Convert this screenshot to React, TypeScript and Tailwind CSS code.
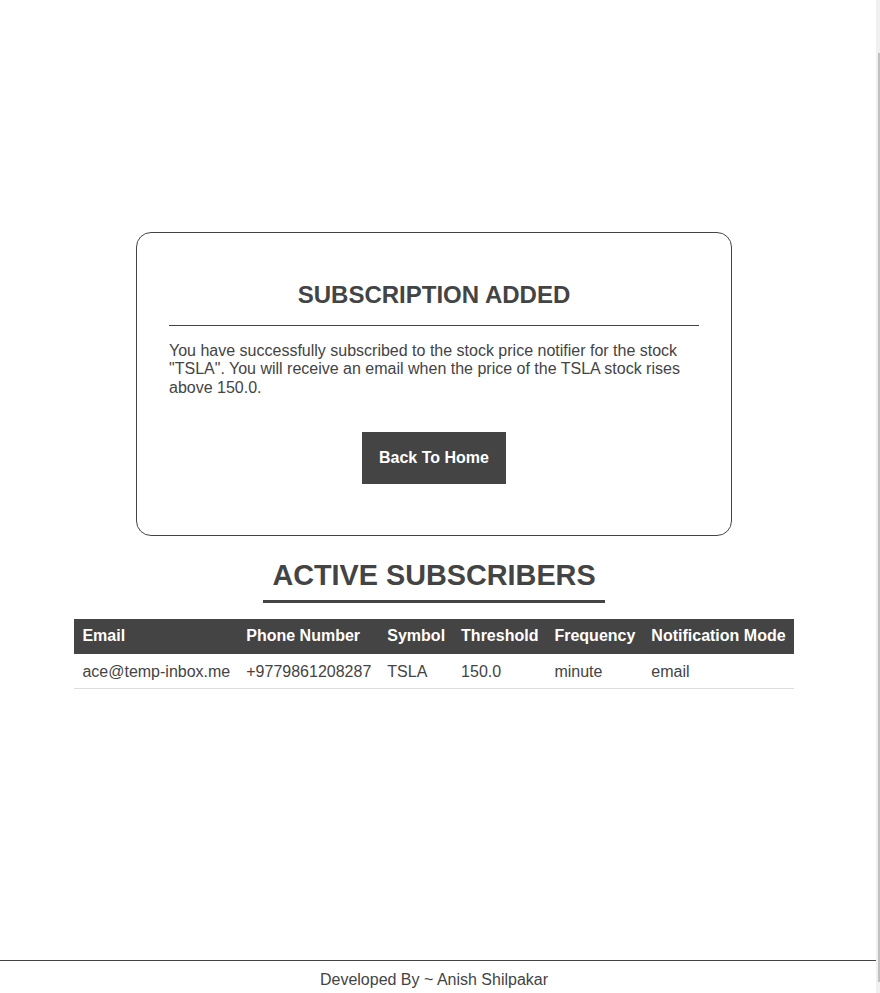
const subscribers = [
  {
    email: "ace@temp-inbox.me",
    phone: "+9779861208287",
    symbol: "TSLA",
    threshold: "150.0",
    frequency: "minute",
    mode: "email",
  },
];

const columns = [
  "Email",
  "Phone Number",
  "Symbol",
  "Threshold",
  "Frequency",
  "Notification Mode",
];

function SubscriptionCard() {
  return (
    <div className="mt-[232px] w-[596px] rounded-[15px] border border-[#444] px-[32px] pt-[48px] pb-[51px]">
      <h2 className="text-center text-[24px] leading-[1.15] font-bold text-[#444]">
        SUBSCRIPTION ADDED
      </h2>
      <hr className="mt-[16.6px] border-t border-[#444]" />
      <p className="mt-[15.8px] text-[16px] leading-[1.15] text-[#444]">
        You have successfully subscribed to the stock price notifier for the
        stock "TSLA". You will receive an email when the price of the TSLA
        stock rises above 150.0.
      </p>
      <div className="mt-[35px] flex justify-center">
        <button className="h-[52px] w-[144px] bg-[#444] text-[16px] font-bold text-white">
          Back To Home
        </button>
      </div>
    </div>
  );
}

function SubscribersTable() {
  return (
    <>
      <h2 className="mt-[23px] border-b-[3px] border-[#444] px-[9px] pb-[8px] text-[28.8px] leading-[1.15] font-bold text-[#444]">
        ACTIVE SUBSCRIBERS
      </h2>
      <table className="mt-[16px] text-[16px] leading-[1.15]">
        <thead>
          <tr className="bg-[#444] text-white">
            {columns.map((col) => (
              <th key={col} className="px-2 py-2 text-left font-bold">
                {col}
              </th>
            ))}
          </tr>
        </thead>
        <tbody>
          {subscribers.map((s) => (
            <tr key={s.email} className="border-b border-[#ddd] text-[#444]">
              <td className="px-2 pt-[9px] pb-[7px]">{s.email}</td>
              <td className="px-2 pt-[9px] pb-[7px]">{s.phone}</td>
              <td className="px-2 pt-[9px] pb-[7px]">{s.symbol}</td>
              <td className="px-2 pt-[9px] pb-[7px]">{s.threshold}</td>
              <td className="px-2 pt-[9px] pb-[7px]">{s.frequency}</td>
              <td className="px-2 pt-[9px] pb-[7px]">{s.mode}</td>
            </tr>
          ))}
        </tbody>
      </table>
    </>
  );
}

export default function App() {
  return (
    <div className="flex h-[993px] overflow-hidden bg-white font-['Liberation_Sans',Arial,sans-serif]">
      <div className="flex flex-1 flex-col">
        <main className="flex flex-1 flex-col items-center pr-2">
          <SubscriptionCard />
          <SubscribersTable />
        </main>
        <footer className="h-[33px] border-t border-[#444] pt-[10px] pr-2 text-center text-[16px] leading-[1.15] text-[#444]">
          Developed By ~ Anish Shilpakar
        </footer>
      </div>
      <div className="flex w-[4px] flex-col bg-[#f0f0f0] pt-[53px] pb-[11px] pl-[2px]">
        <div className="flex-1 bg-[#c1c1c1]" />
      </div>
    </div>
  );
}
